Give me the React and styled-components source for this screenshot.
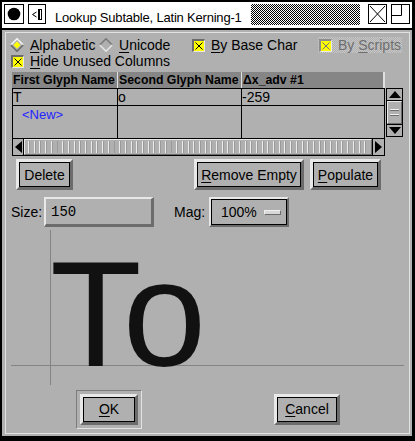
import React from 'react';
import styled, { createGlobalStyle } from 'styled-components';

const LIGHT = '#e8e8e8';
const DARK = '#6c6c6c';
const FACE = '#b0b0b0';

const GlobalStyle = createGlobalStyle`
  html, body { margin: 0; padding: 0; background: #fff; }
  body { font-family: "Liberation Sans", Arial, sans-serif; }
  * { box-sizing: border-box; }
`;

const Window = styled.div`
  width: 415px;
  height: 441px;
  background: #000;
  padding: 2px 3px 5px 2px;
  display: flex;
  flex-direction: column;
`;

const TitleBar = styled.div`
  flex: none;
  height: 26px;
  margin-bottom: 2px;
  background: #fff;
  display: flex;
  align-items: flex-start;
  padding: 2px 2px 0 2px;
`;

const TitleBox = styled.div`
  flex: none;
  width: ${p => p.$w}px;
  height: 20px;
  margin-left: ${p => p.$ml || 0}px;
  border: 1px solid #000;
  display: flex;
  align-items: center;
  justify-content: center;
  svg { display: block; }
`;

const TitleText = styled.div`
  flex: none;
  width: 196px;
  margin-left: 9px;
  margin-top: 6px;
  font-size: 13px;
  line-height: 15px;
  letter-spacing: -0.2px;
  color: #000;
  white-space: nowrap;
`;

const Checker = styled.div`
  flex: none;
  width: 109px;
  height: 21px;
  background: repeating-conic-gradient(#000 0 25%, #fff 0 50%) 0 0 / 2px 2px;
`;

const Body = styled.div`
  flex: 1;
  background: ${FACE};
  padding: 2px 2px 2px 3px;
  display: flex;
`;

const Frame = styled.div`
  flex: 1;
  border: 1px solid #e2e2e2;
  display: flex;
  flex-direction: column;
`;

const OptionRow = styled.div`
  height: 16px;
  margin-top: ${p => p.$mt || 0}px;
  padding-left: 4px;
  display: grid;
  grid-template-columns: ${p => p.$cols || 'auto'};
  justify-content: start;
`;

const Option = styled.label`
  display: flex;
  align-items: center;
  gap: 6px;
  font-size: 14px;
  line-height: 16px;
  color: ${p => (p.$disabled ? '#6e6e6e' : '#000')};
  white-space: nowrap;
  width: fit-content;
  padding-right: ${p => (p.$disabled ? 1 : 0)}px;
  background: ${p =>
    p.$disabled
      ? 'repeating-conic-gradient(#c6c6c6 0 25%, #b0b0b0 0 50%) 0 0 / 2px 2px'
      : 'transparent'};
  u { text-decoration-thickness: 1px; text-underline-offset: 2px; }
`;

const Indicator = styled.span`
  width: 14px;
  height: 14px;
  display: flex;
  align-items: center;
  justify-content: flex-end;
  svg { display: block; }
`;

const Diamond = ({ on }) => (
  <svg width="14" height="14" viewBox="0 0 14 14">
    <polygon points="7,0.5 13.5,7 7,13.5 0.5,7" fill="#b0b0b0" />
    <polyline points="0.8,7 7,0.8 13.2,7" fill="none" stroke={on ? '#f4f4f4' : '#7a7a7a'} strokeWidth="1.6" />
    <polyline points="0.8,7 7,13.2 13.2,7" fill="none" stroke={on ? '#6a6a6a' : '#e4e4e4'} strokeWidth="1.6" />
    <polygon points="7,3.5 10.5,7 7,10.5 3.5,7" fill={on ? '#ffff00' : '#b0b0b0'} />
  </svg>
);

const CheckBox = ({ disabled }) => (
  <svg width="13" height="13" viewBox="0 0 13 13">
    <rect x="0" y="0" width="13" height="13" fill={disabled ? '#eaeaea' : '#e6e6e6'} />
    <polygon points="0,0 13,0 12,2 2,2 2,12 0,13" fill={disabled ? '#8c8c8c' : '#6c6c6c'} />
    <rect x="2" y="2" width="10" height="10" fill="#ffff00" />
    <path d="M3.5 3.5 L10.5 10.5 M10.5 3.5 L3.5 10.5" stroke={disabled ? '#777' : '#000'} strokeWidth="1" />
  </svg>
);

const Table = styled.div`
  margin: 3px 6px 0 6px;
  display: grid;
  grid-template-columns: 373px 18px;
  grid-template-rows: 16px 50px 18px;
`;

const Header = styled.div`
  grid-column: 1;
  grid-row: 1;
  display: grid;
  grid-template-columns: 106px 124px 1fr;
  background: #868686;
`;

const HeaderCell = styled.div`
  font-size: 12.3px;
  font-weight: bold;
  line-height: 16px;
  padding-left: 1px;
  color: #000;
  white-space: nowrap;
  overflow: hidden;
  border-right: ${p => (p.$last ? 2 : 1)}px solid #e0e0e0;
`;

const Grid = styled.div`
  grid-column: 1;
  grid-row: 2;
  border: 1px solid #000;
  border-bottom: none;
  display: grid;
  grid-template-columns: 105px 124px 1fr;
  grid-template-rows: 17px 1fr;
`;

const Cell = styled.div`
  line-height: 14px;
  padding: ${p => (p.$new ? '2px 0 0 9px' : '1px 0 0 0')};
  color: ${p => (p.$new ? '#2424ff' : '#000')};
  font-size: ${p => (p.$new ? 13 : 14)}px;
  border-right: ${p => (p.$last ? 'none' : '1px solid #000')};
  border-bottom: ${p => (p.$top ? '1px solid #000' : 'none')};
  white-space: nowrap;
`;

const VScroll = styled.div`
  grid-column: 2;
  grid-row: 2;
  margin-left: 1px;
  border: 1px solid #000;
  display: flex;
  flex-direction: column;
  height: 49px;
`;

const ArrowBox = styled.div`
  flex: none;
  height: ${p => p.$h || 12}px;
  width: ${p => p.$w || 'auto'};
  display: flex;
  align-items: center;
  justify-content: center;
  border-bottom: ${p => (p.$edge === 'bottom' ? '1px solid #000' : 'none')};
  border-top: ${p => (p.$edge === 'top' ? '1px solid #000' : 'none')};
  border-right: ${p => (p.$edge === 'right' ? '1px solid #000' : 'none')};
  border-left: ${p => (p.$edge === 'left' ? '1px solid #000' : 'none')};
  svg { display: block; }
`;

const VThumb = styled.div`
  flex: 1;
  border: 1px solid;
  border-color: ${LIGHT} ${DARK} ${DARK} ${LIGHT};
  display: flex;
  flex-direction: column;
  align-items: center;
  justify-content: center;
  gap: 3px;
`;

const Grip = styled.div`
  width: 9px;
  height: 2px;
  border-top: 1px solid #f0f0f0;
  border-bottom: 1px solid #707070;
`;

const HScroll = styled.div`
  grid-column: 1;
  grid-row: 3;
  border: 1px solid #000;
  display: flex;
`;

const HThumb = styled.div`
  flex: 1;
  border: 1px solid;
  border-color: ${LIGHT} ${DARK} ${DARK} ${LIGHT};
  background: repeating-linear-gradient(90deg, #b0b0b0 0 3px, #ececec 3px 4px, #9a9a9a 4px 5px, #b0b0b0 5px 5.7px);
  background-clip: content-box;
  padding: 1px 1px;
`;

const ButtonRow = styled.div`
  display: flex;
  align-items: center;
  margin-top: ${p => p.$mt || 0}px;
  height: ${p => p.$h}px;
`;

const Button = styled.button`
  flex: none;
  width: ${p => p.$w}px;
  height: 31px;
  margin-left: ${p => p.$ml || 0}px;
  padding: 0;
  background: ${FACE};
  border: 3px solid;
  border-color: ${LIGHT} ${DARK} ${DARK} ${LIGHT};
  box-shadow: inset 0 0 0 1px #000;
  font-family: "Liberation Sans", Arial, sans-serif;
  font-size: 14px;
  color: #000;
  u { text-decoration-thickness: 1px; text-underline-offset: 2px; }
`;

const DefaultFrame = styled.div`
  flex: none;
  margin-left: ${p => p.$ml || 0}px;
  padding: 3px;
  border: 1px solid;
  border-color: #7c7c7c #e4e4e4 #e4e4e4 #7c7c7c;
  display: flex;
`;

const FieldRow = styled.div`
  display: flex;
  align-items: center;
  height: 30px;
  margin-top: 7px;
`;

const FieldLabel = styled.span`
  flex: none;
  width: ${p => p.$w}px;
  margin-left: ${p => p.$ml || 0}px;
  font-size: 14px;
  color: #000;
`;

const TextField = styled.div`
  flex: none;
  width: 110px;
  height: 30px;
  border-style: solid;
  border-width: 2px 3px 3px 2px;
  border-color: ${LIGHT} ${DARK} ${DARK} ${LIGHT};
  padding-left: 5px;
  display: flex;
  align-items: center;
  font-family: "Liberation Mono", monospace;
  font-size: 14px;
  color: #000;
`;

const MagBox = styled.div`
  flex: none;
  width: 80px;
  height: 30px;
  border: 2px solid;
  border-color: ${LIGHT} ${DARK} ${DARK} ${LIGHT};
  box-shadow: inset 0 0 0 1px #000;
  padding-left: 10px;
  display: flex;
  align-items: center;
  gap: 7px;
  font-size: 14px;
  color: #000;
`;

const MagBar = styled.span`
  width: 17px;
  height: 5px;
  background: #d8d8d8;
  border: 1px solid;
  border-color: #f0f0f0 #6c6c6c #6c6c6c #f0f0f0;
`;

const Preview = styled.svg`
  flex: none;
  display: block;
`;

const Up = () => (
  <svg width="12" height="7" viewBox="0 0 12 7"><polygon points="6,0 12,7 0,7" fill="#000" /></svg>
);
const Down = () => (
  <svg width="12" height="7" viewBox="0 0 12 7"><polygon points="0,0 12,0 6,7" fill="#000" /></svg>
);
const Left = () => (
  <svg width="7" height="12" viewBox="0 0 7 12"><polygon points="0,6 7,0 7,12" fill="#000" /></svg>
);
const Right = () => (
  <svg width="7" height="12" viewBox="0 0 7 12"><polygon points="0,0 7,6 0,12" fill="#000" /></svg>
);

export default function App() {
  return (
    <>
      <GlobalStyle />
      <Window>
        <TitleBar>
          <TitleBox $w={20}>
            <svg width="18" height="18" viewBox="0 0 18 18"><circle cx="9" cy="9" r="6.3" fill="#000" /></svg>
          </TitleBox>
          <TitleBox $w={18} $ml={4}>
            <svg width="16" height="18" viewBox="0 0 16 18">
              <path d="M7.5 7 L3.5 9.5 L7.5 12" fill="none" stroke="#000" strokeWidth="1" />
              <rect x="9.5" y="4.5" width="3" height="10" fill="none" stroke="#000" strokeWidth="1" />
              <line x1="10.5" y1="5" x2="10.5" y2="14" stroke="#000" strokeWidth="1" />
            </svg>
          </TitleBox>
          <TitleText>Lookup Subtable, Latin Kerning-1</TitleText>
          <Checker />
          <TitleBox $w={19} $ml={8}>
            <svg width="17" height="18" viewBox="0 0 17 18">
              <path d="M1 1 L16 17 M16 1 L1 17" stroke="#000" strokeWidth="1" />
            </svg>
          </TitleBox>
          <TitleBox $w={19} $ml={4}>
            <svg width="17" height="18" viewBox="0 0 17 18">
              <path d="M9.5 0 V10.5 H0" fill="none" stroke="#000" strokeWidth="1" />
            </svg>
          </TitleBox>
        </TitleBar>
        <Body>
          <Frame>
            <OptionRow $mt={4} $cols="89px 92px 127px auto">
              <Option><Indicator><Diamond on /></Indicator><span><u>A</u>lphabetic</span></Option>
              <Option><Indicator><Diamond /></Indicator><span><u>U</u>nicode</span></Option>
              <Option><Indicator><CheckBox /></Indicator><span><u>B</u>y Base Char</span></Option>
              <Option $disabled><Indicator><CheckBox disabled /></Indicator><span>By <u>S</u>cripts</span></Option>
            </OptionRow>
            <OptionRow>
              <Option><Indicator><CheckBox /></Indicator><span><u>H</u>ide Unused Columns</span></Option>
            </OptionRow>
            <Table>
              <Header>
                <HeaderCell>First Glyph Name</HeaderCell>
                <HeaderCell>Second Glyph Name</HeaderCell>
                <HeaderCell $last>Δx_adv #1</HeaderCell>
              </Header>
              <Grid>
                <Cell $top>T</Cell>
                <Cell $top>o</Cell>
                <Cell $top $last>-259</Cell>
                <Cell $new>&lt;New&gt;</Cell>
                <Cell />
                <Cell $last />
              </Grid>
              <VScroll>
                <ArrowBox $edge="bottom"><Up /></ArrowBox>
                <VThumb><Grip /><Grip /></VThumb>
                <ArrowBox $edge="top"><Down /></ArrowBox>
              </VScroll>
              <HScroll>
                <ArrowBox $h={16} $w="11px" $edge="right"><Left /></ArrowBox>
                <HThumb />
                <ArrowBox $h={16} $w="12px" $edge="left"><Right /></ArrowBox>
              </HScroll>
            </Table>
            <ButtonRow $mt={3} $h={31}>
              <Button $w={57} $ml={10}>Delete</Button>
              <Button $w={110} $ml={121}><u>R</u>emove Empty</Button>
              <Button $w={71} $ml={6}><u>P</u>opulate</Button>
            </ButtonRow>
            <FieldRow>
              <FieldLabel $w={33} $ml={5}>Size:</FieldLabel>
              <TextField>150</TextField>
              <FieldLabel $w={35} $ml={20}>Mag:</FieldLabel>
              <MagBox>100%<MagBar /></MagBox>
            </FieldRow>
            <Preview width="403" height="162" viewBox="0 0 403 162">
              <line x1="44.5" y1="3" x2="44.5" y2="158" stroke="#848484" strokeWidth="1" />
              <line x1="5" y1="138.5" x2="398" y2="138.5" stroke="#848484" strokeWidth="1" />
              <text y="139" fontFamily="Liberation Sans, Arial, sans-serif" fontSize="150" fill="#111">
                <tspan x="44">T</tspan><tspan x="116.7">o</tspan>
              </text>
            </Preview>
            <ButtonRow $h={40}>
              <DefaultFrame $ml={70}>
                <Button $w={58}><u>O</u>K</Button>
              </DefaultFrame>
              <Button $w={66} $ml={132}><u>C</u>ancel</Button>
            </ButtonRow>
          </Frame>
        </Body>
      </Window>
    </>
  );
}
